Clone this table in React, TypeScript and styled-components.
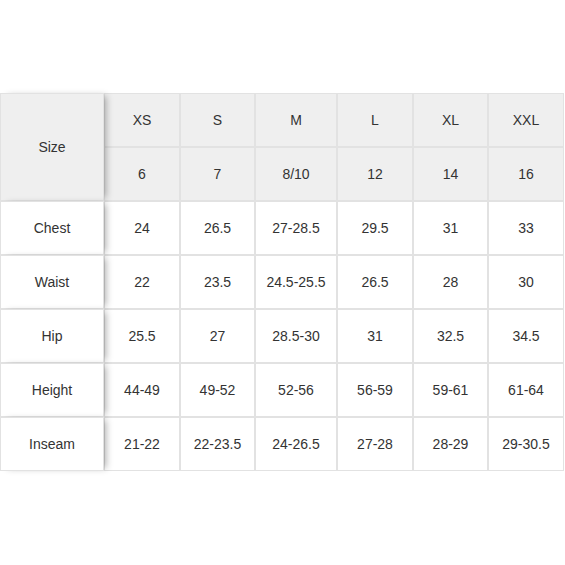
import React from 'react';
import styled, { createGlobalStyle } from 'styled-components';

type SizeColumn = {
  label: string;
  age: string;
  width: number;
};

type MeasureRow = {
  name: string;
  values: string[];
};

const columns: SizeColumn[] = [
  { label: 'XS', age: '6', width: 76 },
  { label: 'S', age: '7', width: 75 },
  { label: 'M', age: '8/10', width: 82 },
  { label: 'L', age: '12', width: 76 },
  { label: 'XL', age: '14', width: 75 },
  { label: 'XXL', age: '16', width: 76 },
];

const rows: MeasureRow[] = [
  { name: 'Chest', values: ['24', '26.5', '27-28.5', '29.5', '31', '33'] },
  { name: 'Waist', values: ['22', '23.5', '24.5-25.5', '26.5', '28', '30'] },
  { name: 'Hip', values: ['25.5', '27', '28.5-30', '31', '32.5', '34.5'] },
  { name: 'Height', values: ['44-49', '49-52', '52-56', '56-59', '59-61', '61-64'] },
  { name: 'Inseam', values: ['21-22', '22-23.5', '24-26.5', '27-28', '28-29', '29-30.5'] },
];

const GlobalStyle = createGlobalStyle`
  html, body {
    margin: 0;
    padding: 0;
    background: #fff;
  }
  body {
    font-family: "Liberation Sans", Arial, sans-serif;
    color: #333;
  }
`;

const Page = styled.div`
  height: 564px;
  display: flex;
  align-items: center;
`;

const SizeTable = styled.table`
  width: 564px;
  table-layout: fixed;
  border-collapse: separate;
  border-spacing: 0;
  font-size: 14px;
`;

const Cell = styled.td<{ $head?: boolean }>`
  height: 54px;
  box-sizing: border-box;
  padding: 0;
  border: 1px solid #e2e2e2;
  text-align: center;
  vertical-align: middle;
  color: #333;
  background: ${(p) => (p.$head ? '#efefef' : '#fff')};
`;

const StickyCell = styled(Cell)`
  position: sticky;
  left: 0;
  z-index: 1;
  box-shadow: 5px 0 7px -3px rgba(0, 0, 0, 0.32);
`;

const App: React.FC = () => (
  <>
    <GlobalStyle />
    <Page>
      <SizeTable>
        <colgroup>
          <col style={{ width: 104 }} />
          {columns.map((c) => (
            <col key={c.label} style={{ width: c.width }} />
          ))}
        </colgroup>
        <tbody>
          <tr>
            <StickyCell $head rowSpan={2}>
              Size
            </StickyCell>
            {columns.map((c) => (
              <Cell $head key={c.label}>
                {c.label}
              </Cell>
            ))}
          </tr>
          <tr>
            {columns.map((c) => (
              <Cell $head key={c.label}>
                {c.age}
              </Cell>
            ))}
          </tr>
          {rows.map((row) => (
            <tr key={row.name}>
              <StickyCell>{row.name}</StickyCell>
              {row.values.map((v, i) => (
                <Cell key={i}>{v}</Cell>
              ))}
            </tr>
          ))}
        </tbody>
      </SizeTable>
    </Page>
  </>
);

export default App;
